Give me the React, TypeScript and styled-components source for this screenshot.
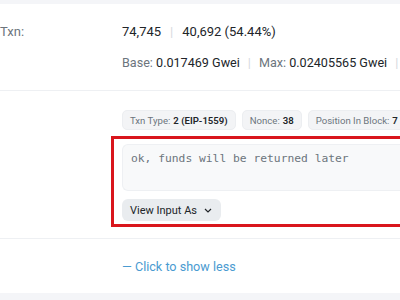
import React from "react";
import styled, { createGlobalStyle } from "styled-components";

const Global = createGlobalStyle`
  html, body { margin: 0; padding: 0; background: #ffffff; }
  body { font-family: Roboto, "Liberation Sans", sans-serif; width: 400px; height: 300px; overflow: hidden; }
`;

const Page = styled.div`
  width: 400px;
  height: 300px;
  overflow: hidden;
  display: flex;
  flex-direction: column;
  background: #f4f5f8;
`;

const Card = styled.div`
  margin-top: 4px;
  height: 289px;
  background: #ffffff;
  display: flex;
  flex-direction: column;
`;

const Row = styled.div<{ $border?: boolean; $h: number }>`
  display: flex;
  height: ${(p) => p.$h}px;
  border-bottom: ${(p) => (p.$border ? "1px solid #eef0f3" : "none")};
  box-sizing: border-box;
`;

const Label = styled.div`
  width: 122px;
  flex: none;
  color: #6c757d;
  font-size: 13px;
  padding-top: 20px;
  white-space: nowrap;
`;

const Value = styled.div`
  flex: 1;
  min-width: 0;
  display: flex;
  flex-direction: column;
  white-space: nowrap;
`;

const Line = styled.div<{ $top: number; $size: number }>`
  margin-top: ${(p) => p.$top}px;
  font-size: ${(p) => p.$size}px;
  color: #212529;
  display: flex;
  align-items: center;
`;

const Sep = styled.span<{ $gap?: number }>`
  color: #d5d9de;
  margin: 0 ${(p) => p.$gap ?? 9}px;
`;

const Muted = styled.span`
  color: #6c757d;
`;

const Badges = styled.div`
  display: flex;
  gap: 6px;
  margin-top: 19px;
`;

const Badge = styled.span`
  display: inline-flex;
  align-items: center;
  height: 20px;
  padding: 0 7px;
  border-radius: 5px;
  background: #f3f4f6;
  border: 1px solid #eceef1;
  box-sizing: border-box;
  font-size: 9.6px;
  color: #6c757d;
  b { color: #212529; font-weight: 600; margin-left: 3px; }
`;

const Highlight = styled.div`
  margin-top: 6px;
  margin-left: -11px;
  width: 320px;
  height: 91px;
  box-sizing: border-box;
  border: 3px solid #d9161c;
  border-right: none;
  padding: 5px 0 0 8px;
  display: flex;
  flex-direction: column;
`;

const InputBox = styled.div`
  height: 47px;
  background: #f8f9fa;
  border: 1px solid #eef0f3;
  border-right: none;
  border-radius: 6px 0 0 6px;
  box-sizing: border-box;
  padding: 7px 8px;
  font-family: "DejaVu Sans Mono", "Liberation Mono", monospace;
  font-size: 11.3px;
  color: #6c757d;
`;

const ViewBtn = styled.div`
  margin-top: 8px;
  align-self: flex-start;
  height: 22px;
  padding: 0 9px 0 8px;
  border-radius: 6px;
  background: #e9ecef;
  display: inline-flex;
  align-items: center;
  gap: 7px;
  font-size: 11px;
  color: #212529;
`;

const Footer = styled.div`
  display: flex;
  padding-left: 122px;
  padding-top: 20px;
`;

const ShowLess = styled.span`
  color: #4a9bd1;
  font-size: 12.6px;
`;

export default function App() {
  return (
    <>
      <Global />
      <Page>
        <Card>
          <Row $border $h={87}>
            <Label>Txn:</Label>
            <Value>
              <Line $top={20} $size={13}>
                74,745<Sep>|</Sep>40,692 (54.44%)
              </Line>
              <Line $top={16} $size={12.6}>
                <Muted>Base:</Muted>&nbsp;0.017469 Gwei<Sep $gap={8}>|</Sep>
                <Muted>Max:</Muted>&nbsp;0.02405565 Gwei<Sep $gap={8}>|</Sep>
              </Line>
            </Value>
          </Row>
          <Row $border $h={148}>
            <Label />
            <Value>
              <Badges>
                <Badge>
                  Txn Type:<b>2 (EIP-1559)</b>
                </Badge>
                <Badge>
                  Nonce:<b>38</b>
                </Badge>
                <Badge>
                  Position In Block:<b>7</b>
                </Badge>
              </Badges>
              <Highlight>
                <InputBox>ok, funds will be returned later</InputBox>
                <ViewBtn>
                  View Input As
                  <svg width="8" height="5" viewBox="0 0 8 5" fill="none">
                    <path d="M1 1l3 3 3-3" stroke="#212529" strokeWidth="1.2" />
                  </svg>
                </ViewBtn>
              </Highlight>
            </Value>
          </Row>
          <Footer>
            <ShowLess>— Click to show less</ShowLess>
          </Footer>
        </Card>
      </Page>
    </>
  );
}
